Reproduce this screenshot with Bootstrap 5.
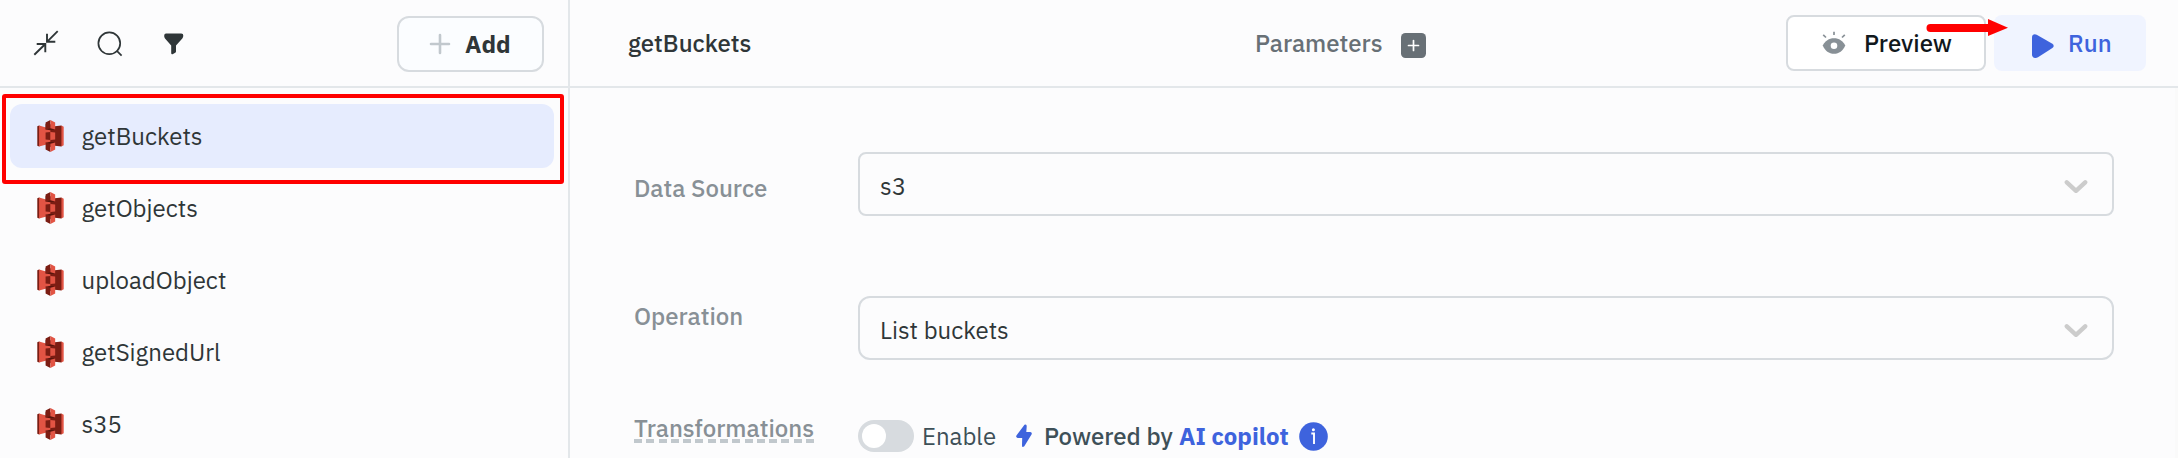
<!DOCTYPE html>
<html lang="en">
<head>
<meta charset="utf-8">
<title>Query panel</title>
<link href="https://cdn.jsdelivr.net/npm/bootstrap@5.3.0/dist/css/bootstrap.min.css" rel="stylesheet">
<style>
body{font-family:"IBM Plex Sans",Roboto,sans-serif;font-size:24px;line-height:28px;color:#2f3638;background:#fcfcfd;height:458px;overflow:hidden}
svg{display:block;flex:none}
.medium{font-weight:500}
.side{width:570px;height:458px;border-right:2px solid #e3e7ea;flex:none}
.bar{height:88px;border-bottom:2px solid #e3e7ea}
.side .bar{padding:2px 24px 0 33px}
.add-btn{width:147px;height:56px;border:2px solid #d7dbdf;border-radius:12px;background:#fbfdff;color:#2f3638;font-size:24px;line-height:28px;font-weight:700;padding:0 0 0 30px;gap:14px}
.queries{padding:16px 14px 0 10px;gap:8px}
.query{height:64px;border:0;border-radius:12px!important;background:transparent;color:#2f3638;padding:0 0 0 26.5px;gap:18px}
.query.active{background:#e6ecfe;color:#2f3638;margin:0}
.mark-box{left:2px;top:94px;width:562px;height:90px;border:4px solid #f00;border-radius:3px;pointer-events:none;z-index:3}
.main-bar{padding:0 32px 0 58px}
.query-name{width:627px}
.params{color:#687076}
.tool-btn{height:56px;border-radius:8px;font-size:24px;line-height:28px;font-weight:500;padding:0}
.preview-btn{width:200px;border:2px solid #d7dbdf;background:#fff;color:#11181c;padding-left:34px;gap:18px}
.run-btn{width:152px;background:#f0f4ff;color:#3e63dd;border:0;padding-left:38px;gap:14px}
.arrow{left:1926px;top:18px;z-index:4}
.form-area{padding:64px 61px 0 64px;height:370px;border-right:3px solid #fafafa}
.field-label{width:224px;flex:none;color:#889096;font-weight:500}
.picker{height:64px;border:2px solid #d7dbdf;border-radius:8px;padding:0 24px 0 20px;color:#2f3638}
.picker span{padding-top:4px}
.picker svg{margin-top:6px}
.picker.soft{border-radius:12px}
.dashes{width:180px;height:4px;margin-top:-3px;background:repeating-linear-gradient(90deg,#c1c8cd 0 8px,transparent 8px 12.29px)}
.switch{width:56px;height:32px;border-radius:16px;background:#d7dbdf;padding:4px;flex:none}
.knob{width:24px;height:24px;border-radius:50%;background:#fff}
.slate{color:#3e5058}
.brand{color:#3e63dd;font-weight:700}
</style>
</head>
<body>
<svg width="0" height="0" class="position-absolute"><defs>
<symbol id="s3" viewBox="16 16 396 480"><path fill="#e25444" d="M378 99L295 257l83 158 34-19V118z"/><path fill="#7b1d13" d="M378 99L212 118 127.500 257 212 396l166 19V99zM43 99L16 111v292l27 12 169-158z"/><path fill="#e25444" d="M42.637 98.667l169.587 47.111v222.444L42.637 415.111z"/><path fill="#58150d" d="M212.313 170.667l-72.008-11.556 72.008-81.778 71.830 81.778zM284.143 159.111l-71.919 11.733-71.919-11.733V77.333M212.313 342.222l-72.008 13.334 72.008 70.222 71.830-70.222z"/><path fill="#7b1d13" d="M212 16L140 54v105l72.224-20.333zM212.224 196.444l-71.919 7.823V309.105l71.919 8.228zM212.224 373.333L140.305 355.300v103.063L212.224 496z"/><path fill="#e25444" d="M284.143 355.300l-71.919 18.038V496l71.919-37.637zM212.224 196.444l71.919 7.823V309.105l-71.919 8.228zM212 16l72 38v105l-72-20z"/></symbol>
<symbol id="chev" viewBox="0 0 24 16"><path d="M2.800 3.300L12 11.800L21.200 3.300" fill="none" stroke="#ccc" stroke-width="4.400" stroke-linecap="round" stroke-linejoin="round"/></symbol>
</defs></svg>
<div class="d-flex">
  <aside class="side position-relative">
    <div class="bar d-flex align-items-center">
      <svg width="26" height="26" viewBox="0 0 26 26" fill="none" stroke="#2f3638" stroke-width="1.900" style="margin-top:-2px"><path d="M24.700 1.200L14 11.800M14 3.800V11.800H22.300M1.300 24.800L12.300 14M3.700 14H12.300V22.300"/></svg>
      <svg width="26" height="26" viewBox="0 0 26 26" fill="none" stroke="#2f3638" stroke-width="1.700" style="margin-left:38px"><circle cx="12.300" cy="12.300" r="10.900"/><path d="M19.600 19.600L24.600 24.600"/></svg>
      <svg width="20" height="22" viewBox="0 0 20 22" fill="#2f3638" style="margin-left:41px"><path d="M2 .5H17.200Q19.500.5 19.300 2.800Q19.200 4.300 18.300 5.400L12 12.500V18.400Q12 19.300 11.200 19.800L8.600 21.200Q7.200 21.700 7.200 20.100V12.500L1 5.400Q0 4.300 .2 2.500Q.3.500 2 .5z"/></svg>
      <button class="btn add-btn d-flex align-items-center ms-auto"><svg width="22" height="22" viewBox="0 0 22 22" stroke="#c1c8cd" stroke-width="2.600" stroke-linecap="round"><path d="M11 2V20M2 11H20"/></svg><span>Add</span></button>
    </div>
    <div class="queries list-group">
      <a class="query list-group-item active d-flex align-items-center"><svg width="27" height="32"><use href="#s3"/></svg><span>getBuckets</span></a>
      <a class="query list-group-item d-flex align-items-center"><svg width="27" height="32"><use href="#s3"/></svg><span>getObjects</span></a>
      <a class="query list-group-item d-flex align-items-center"><svg width="27" height="32"><use href="#s3"/></svg><span>uploadObject</span></a>
      <a class="query list-group-item d-flex align-items-center"><svg width="27" height="32"><use href="#s3"/></svg><span>getSignedUrl</span></a>
      <a class="query list-group-item d-flex align-items-center"><svg width="27" height="32"><use href="#s3"/></svg><span>s35</span></a>
    </div>
    <div class="mark-box position-absolute"></div>
  </aside>
  <main class="flex-grow-1">
    <div class="bar main-bar d-flex align-items-center">
      <div class="query-name medium">getBuckets</div>
      <div class="params medium d-flex align-items-center"><span style="width:146px">Parameters</span><svg width="25" height="25" viewBox="0 0 25 25" style="margin:5px 0 0"><rect width="25" height="25" rx="4.500" fill="#687076"/><path d="M12.500 7.500V17.500M7.500 12.500H17.500" stroke="#fff" stroke-width="1.700" stroke-linecap="round"/></svg></div>
      <div class="d-flex gap-2 ms-auto">
        <button class="btn tool-btn preview-btn d-flex align-items-center"><svg width="24" height="24" viewBox="0 0 24 24"><path d="M.8 14.500C3 10 7 7.300 12 7.300S21 10 23.200 14.500C21 19.800 17 22.800 12 22.800S3 19.800.8 14.500z" fill="#889096"/><circle cx="12" cy="14.800" r="3.300" fill="#fff"/><path d="M12 .8V4M1.200 3.800L4 6.500M22.800 3.800L20 6.500" stroke="#889096" stroke-width="1.700"/></svg><span>Preview</span></button>
        <button class="btn tool-btn run-btn d-flex align-items-center"><svg width="22" height="24" viewBox="0 0 22 24" style="margin-top:6px"><path d="M0 3.400C0 .6 2.400-.5 4.700.8L20.400 9.800Q23 11.900 20.400 14L6 23.200C3 25 0 23.600 0 20.800z" fill="#3e63dd"/></svg><span>Run</span></button>
      </div>
    </div>
    <div class="form-area">
      <div class="d-flex align-items-center"><label class="field-label" style="padding-top:8px">Data Source</label><div class="picker flex-grow-1 d-flex align-items-center justify-content-between"><span>s3</span><svg width="24" height="16"><use href="#chev"/></svg></div></div>
      <div class="d-flex" style="margin-top:80px"><label class="field-label" style="padding-top:6px">Operation</label><div class="picker soft flex-grow-1 d-flex align-items-center justify-content-between"><span>List buckets</span><svg width="24" height="16"><use href="#chev"/></svg></div></div>
      <div class="d-flex" style="margin-top:54px"><div class="field-label"><div>Transformations</div><div class="dashes"></div></div>
        <div class="d-flex align-items-center" style="margin-top:6px;height:32px"><div class="switch"><div class="knob"></div></div><span class="slate" style="width:102px;padding-left:8px">Enable</span>
        <svg width="16" height="24" viewBox="0 0 16 24"><path d="M8.500.8Q10.800-.4 10.700 2.500L10.300 8H14.300Q16.800 8.600 15.200 11L8.300 22.300Q6 24.300 6 21.200L6.200 14H1.600Q-.7 13.400.6 11.200z" fill="#3e63dd"/></svg>
        <span class="slate medium text-nowrap" style="width:147px;padding-left:12px">Powered by</span><span class="brand text-nowrap" style="width:120px">AI copilot</span>
        <svg width="29" height="29" viewBox="0 0 29 29"><circle cx="14.500" cy="14.500" r="14.300" fill="#3e63dd"/><path d="M12.300 11.500H15V22" fill="none" stroke="#fff" stroke-width="1.900"/><circle cx="14.400" cy="7.800" r="1.500" fill="#fff"/></svg></div>
      </div>
    </div>
  </main>
  <svg class="arrow position-absolute" width="84" height="20" viewBox="0 0 84 20"><path d="M4.500 10H64" stroke="#f00" stroke-width="8" stroke-linecap="round"/><path d="M62 1L82 9.800L62 18z" fill="#f00"/></svg>
</div>
<script src="https://cdn.jsdelivr.net/npm/bootstrap@5.3.0/dist/js/bootstrap.bundle.min.js"></script>
</body>
</html>
